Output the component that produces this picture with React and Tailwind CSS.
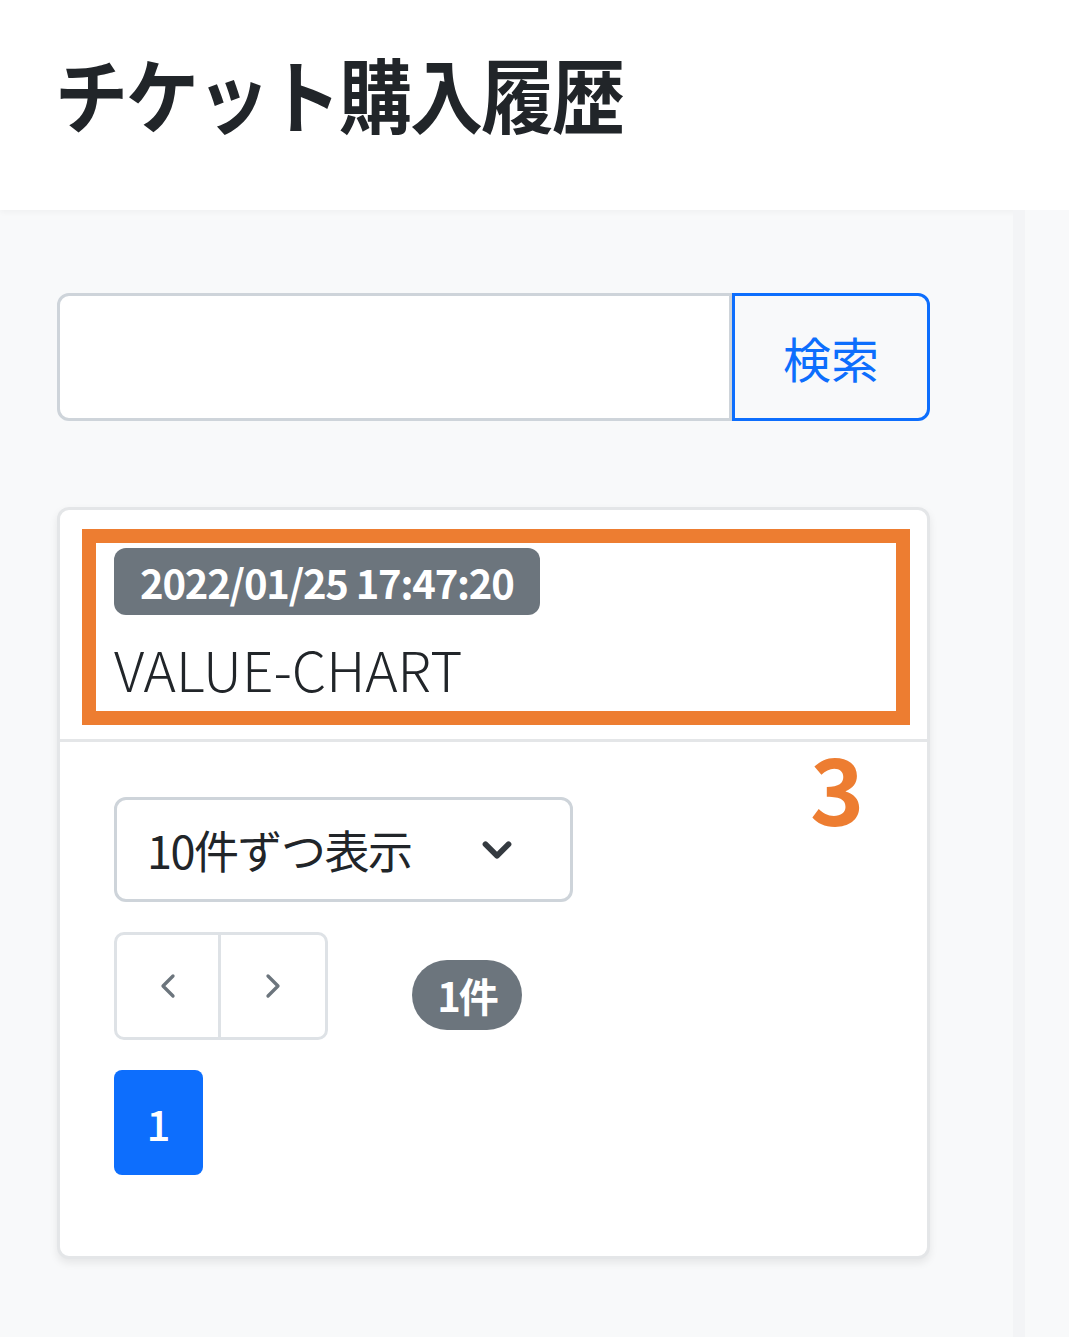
import { ChevronDown, ChevronLeft, ChevronRight } from "lucide-react";

const font = { fontFamily: '"Noto Sans CJK JP", "Noto Sans", sans-serif' };

const App = () => {
  return (
    <div className="min-h-[1337px] w-[1069px] bg-[#f8f9fa] text-[#212529]" style={font}>
      {/* Header */}
      <header className="h-[210px] bg-white shadow-[0_2px_6px_rgba(0,0,0,0.04)] pl-[55px] pt-[52px]">
        <h1 className="text-[73px] font-semibold leading-none tracking-[-2px] scale-y-[1.1] origin-top">チケット購入履歴</h1>
      </header>

      <div className="flex">
        {/* Main column */}
        <main className="w-[1013px] pl-[57px] pr-[83px] pt-[83px] pb-[78px]">
          {/* Search */}
          <div className="flex h-[128px]">
            <input
              type="text"
              className="flex-1 bg-white border-[3px] border-[#ced4da] rounded-l-[12px] outline-none"
            />
            <button className="w-[198px] border-[3px] border-[#0d6efd] rounded-r-[12px] text-[#0d6efd] text-[48px] leading-none">
              検索
            </button>
          </div>

          {/* Card */}
          <div className="mt-[86px] bg-white border-[3px] border-[#e4e6e8] rounded-[12px] shadow-[0_4px_8px_rgba(0,0,0,0.08)] h-[752px]">
            {/* Card header */}
            <div className="relative h-[232px] border-b-[3px] border-[#e4e6e8] pt-[38px] pl-[54px]">
              <span className="inline-flex items-center h-[67px] px-[26px] bg-[#6c757d] text-white font-bold text-[40px] rounded-[12px] leading-none tracking-[-1.2px]">
                2022/01/25 17:47:20
              </span>
              <div className="mt-[26px] text-[55px] font-light leading-none tracking-[0px]">VALUE-CHART</div>
              {/* annotation frame */}
              <div className="absolute left-[22px] top-[19px] w-[828px] h-[196px] border-[14px] border-[#ed7d31]" />
              <div className="absolute left-[750px] top-[230px] text-[92px] font-bold text-[#ed7d31] leading-none">3</div>
            </div>

            {/* Card body */}
            <div className="pl-[54px] pt-[55px]">
              <div className="w-[459px] h-[105px] border-[3px] border-[#ced4da] rounded-[12px] flex items-center justify-between pl-[30px] pr-[50px]">
                <span className="text-[45px] leading-none tracking-[-1.5px]">10件ずつ表示</span>
                <ChevronDown size={46} strokeWidth={3} className="text-[#343a40]" />
              </div>

              <div className="mt-[30px] flex items-start">
                <div className="flex h-[108px] border-[3px] border-[#dee2e6] rounded-[10px]">
                  <button className="w-[104px] flex items-center justify-center border-r-[3px] border-[#dee2e6]">
                    <ChevronLeft size={40} strokeWidth={2} className="text-[#6c757d]" />
                  </button>
                  <button className="w-[104px] flex items-center justify-center">
                    <ChevronRight size={40} strokeWidth={2} className="text-[#6c757d]" />
                  </button>
                </div>
                <span className="ml-[84px] mt-[28px] h-[70px] w-[110px] rounded-full bg-[#6c757d] text-white font-bold text-[40px] flex items-center justify-center leading-none tracking-[-2px]">
                  1件
                </span>
              </div>

              <div className="mt-[30px] w-[89px] h-[105px] bg-[#0d6efd] rounded-[8px] text-white text-[42px] font-medium flex items-center justify-center leading-none">
                1
              </div>
            </div>
          </div>
        </main>

        {/* Right strip */}
        <div className="flex-1 border-l-[12px] border-[#f3f4f6] bg-[#f8f9fa]" />
      </div>
    </div>
  );
};

export default App;
